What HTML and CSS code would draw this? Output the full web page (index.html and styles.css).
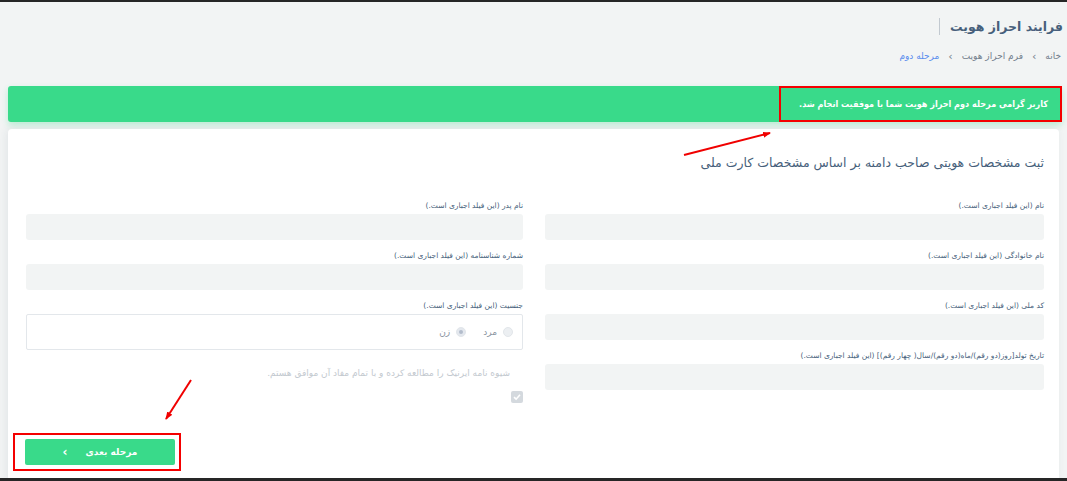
FILE: index.html
```html
<!DOCTYPE html>
<html lang="fa" dir="rtl">
<head>
<meta charset="utf-8">
<title>فرایند احراز هویت</title>
<link rel="stylesheet" href="styles.css">
</head>
<body>
<div class="frame-top"></div>
<header class="page-head">
  <div class="title-row">
    <h1 class="page-title">فرایند احراز هویت</h1>
    <span class="title-sep"></span>
  </div>
  <nav class="crumbs">
    <span class="crumb">خانه</span>
    <span class="crumb-sep">›</span>
    <span class="crumb">فرم احراز هویت</span>
    <span class="crumb-sep">›</span>
    <span class="crumb active">مرحله دوم</span>
  </nav>
</header>

<div class="alert">
  <span class="alert-mark">کاربر گرامی مرحله دوم احراز هویت شما با موفقیت انجام شد.</span>
</div>

<main class="card">
  <h2 class="card-title">ثبت مشخصات هویتی صاحب دامنه بر اساس مشخصات کارت ملی</h2>
  <div class="form-grid">
    <div class="col">
      <div class="field">
        <label class="lbl">نام (این فیلد اجباری است.)</label>
        <div class="input"></div>
      </div>
      <div class="field">
        <label class="lbl">نام خانوادگی (این فیلد اجباری است.)</label>
        <div class="input"></div>
      </div>
      <div class="field">
        <label class="lbl">کد ملی (این فیلد اجباری است.)</label>
        <div class="input"></div>
      </div>
      <div class="field">
        <label class="lbl">تاریخ تولد[روز(دو رقم)/ماه(دو رقم)/سال( چهار رقم)] (این فیلد اجباری است.)</label>
        <div class="input"></div>
      </div>
    </div>
    <div class="col">
      <div class="field">
        <label class="lbl">نام پدر (این فیلد اجباری است.)</label>
        <div class="input"></div>
      </div>
      <div class="field">
        <label class="lbl">شماره شناسنامه (این فیلد اجباری است.)</label>
        <div class="input"></div>
      </div>
      <div class="field">
        <label class="lbl">جنسیت (این فیلد اجباری است.)</label>
        <div class="radio-box">
          <span class="radio"><span class="dot"></span>مرد</span>
          <span class="radio"><span class="dot checked"></span>زن</span>
        </div>
      </div>
      <p class="agree">شیوه نامه ایرنیک را مطالعه کرده و با تمام مفاد آن موافق هستم.</p>
      <span class="checkbox">
        <svg width="12" height="12" viewBox="0 0 12 12"><path d="M3 6.2 L5.1 8.2 L9 3.8" fill="none" stroke="#ffffff" stroke-width="1.6"/></svg>
      </span>
    </div>
  </div>
  <div class="actions">
    <div class="btn-mark">
      <button class="btn-next" type="button"><span>مرحله بعدی</span><span class="chev">›</span></button>
    </div>
  </div>
</main>

<svg class="arrows" width="1067" height="481" viewBox="0 0 1067 481">
  <defs>
    <marker id="ah" markerWidth="8" markerHeight="6" refX="7" refY="3" orient="auto" markerUnits="userSpaceOnUse">
      <path d="M0 0 L8 3 L0 6 Z" fill="#f00000"/>
    </marker>
  </defs>
  <line x1="684" y1="155" x2="770" y2="133" stroke="#f00000" stroke-width="2" marker-end="url(#ah)"/>
  <line x1="191" y1="380" x2="166" y2="419" stroke="#f00000" stroke-width="2" marker-end="url(#ah)"/>
</svg>
<div class="frame-bottom"></div>
</body>
</html>
```

FILE: styles.css
```css
html, body {
  margin: 0;
  padding: 0;
}
body {
  width: 1067px;
  height: 481px;
  overflow: hidden;
  background: #f2f4f4;
  font-family: "DejaVu Sans", "Noto Sans", sans-serif;
  color: #475f7b;
  direction: rtl;
  position: relative;
}
.frame-top {
  height: 2px;
  background: #262626;
}
.frame-bottom {
  position: absolute;
  left: 0;
  right: 0;
  bottom: 0;
  height: 3px;
  background: #262626;
}
.page-head {
  padding: 14px 4px 0 0;
}
.title-row {
  display: flex;
  align-items: center;
  gap: 10px;
  height: 20px;
}
.page-title {
  margin: 0;
  font-size: 12.5px;
  font-weight: bold;
  color: #475f7b;
}
.title-sep {
  width: 1px;
  height: 17px;
  background: #c2c9d0;
}
.crumbs {
  display: flex;
  align-items: center;
  gap: 9px;
  margin-top: 13px;
  padding-right: 2px;
  font-size: 9px;
  color: #727e8c;
  height: 14px;
}
.crumb-sep {
  font-size: 11px;
  color: #727e8c;
}
.crumb.active {
  color: #5a8dee;
}
.alert {
  margin: 23px 5px 0 8px;
  height: 36px;
  background: #39da8a;
  border-radius: 3px;
  box-shadow: 0 3px 6px rgba(57, 218, 138, 0.3);
  display: flex;
}
.alert-mark {
  box-sizing: border-box;
  height: 36px;
  border: 2px solid #f40000;
  padding: 0 12px 0 18px;
  display: flex;
  align-items: center;
  color: #ffffff;
  font-family: "DejaVu Sans Condensed", "DejaVu Sans", sans-serif;
  font-stretch: condensed;
  font-size: 9px;
  font-weight: bold;
}
.card {
  margin: 7px 8px 0 8px;
  background: #ffffff;
  border-radius: 4px;
  box-shadow: -2px 0 8px rgba(38, 60, 85, 0.08);
  padding: 24px 15px 0 17px;
  height: 352px;
  box-sizing: border-box;
}
.card-title {
  margin: 0;
  font-size: 12.5px;
  font-weight: normal;
  line-height: 20px;
  color: #475f7b;
}
.form-grid {
  display: grid;
  grid-template-columns: 499px 497px;
  column-gap: 22px;
  margin-top: 27px;
}
.col {
  display: flex;
  flex-direction: column;
  min-width: 0;
}
.field {
  display: flex;
  flex-direction: column;
  margin-bottom: 10px;
}
.lbl {
  font-size: 7.5px;
  line-height: 12px;
  height: 12px;
  margin-bottom: 2px;
  color: #475f7b;
  white-space: nowrap;
}
.input {
  height: 26px;
  background: #f2f4f4;
  border-radius: 3px;
}
.radio-box {
  box-sizing: border-box;
  height: 36px;
  border: 1px solid #e3e7eb;
  border-radius: 2px;
  display: flex;
  align-items: center;
  gap: 17px;
  padding-right: 9px;
}
.radio {
  display: flex;
  align-items: center;
  gap: 6px;
  font-size: 9px;
  color: #8a94a0;
}
.dot {
  width: 10px;
  height: 10px;
  border-radius: 50%;
  background: #eceff2;
  border: 1px solid #e2e6ea;
  box-sizing: border-box;
  position: relative;
}
.dot.checked {
  background: #e4e8ee;
}
.dot.checked::after {
  content: "";
  position: absolute;
  width: 4px;
  height: 4px;
  border-radius: 50%;
  background: #b3bccb;
  top: 2px;
  left: 2px;
}
.agree {
  margin: 6px 13px 0 0;
  font-size: 9px;
  line-height: 14px;
  color: #c3c9cf;
}
.checkbox {
  align-self: flex-start;
  width: 12px;
  height: 12px;
  margin-top: 11px;
  border-radius: 2px;
  background: #d4d9de;
  display: flex;
  flex: none;
}
.actions {
  display: flex;
  justify-content: flex-end;
  margin-top: 30px;
}
.btn-mark {
  border: 2px solid #f40000;
  padding: 4px 4px 4px 10px;
  margin-left: -12px;
  display: flex;
}
.btn-next {
  width: 150px;
  height: 26px;
  border: none;
  border-radius: 2px;
  background: #39da8a;
  color: #ffffff;
  font-family: "DejaVu Sans", "Noto Sans", sans-serif;
  font-size: 9px;
  font-weight: bold;
  display: flex;
  align-items: center;
  justify-content: center;
  gap: 18px;
  direction: rtl;
  padding: 0;
}
.chev {
  font-size: 12px;
}
.arrows {
  position: absolute;
  left: 0;
  top: 0;
  pointer-events: none;
}
```
